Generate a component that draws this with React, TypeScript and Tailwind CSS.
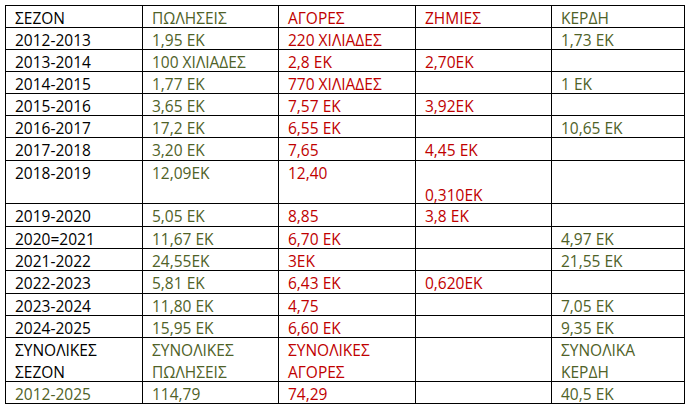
const GREEN = "text-[#4f6228]";
const RED = "text-[#c00000]";
const BLACK = "text-black";

type Cell = { t: string; c: string };

const colColors = [BLACK, GREEN, RED, RED, GREEN];

const rows: string[][] = [
  ["ΣΕΖΟΝ", "ΠΩΛΗΣΕΙΣ", "ΑΓΟΡΕΣ", "ΖΗΜΙΕΣ", "ΚΕΡΔΗ"],
  ["2012-2013", "1,95 ΕΚ", "220 ΧΙΛΙΑΔΕΣ", "", "1,73 ΕΚ"],
  ["2013-2014", "100 ΧΙΛΙΑΔΕΣ", "2,8 ΕΚ", "2,70ΕΚ", ""],
  ["2014-2015", "1,77 ΕΚ", "770 ΧΙΛΙΑΔΕΣ", "", "1 ΕΚ"],
  ["2015-2016", "3,65 ΕΚ", "7,57 ΕΚ", "3,92ΕΚ", ""],
  ["2016-2017", "17,2 ΕΚ", "6,55 ΕΚ", "", "10,65 ΕΚ"],
  ["2017-2018", "3,20 ΕΚ", "7,65", "4,45 ΕΚ", ""],
  ["2018-2019", "12,09ΕΚ", "12,40", "\n0,310ΕΚ", ""],
  ["2019-2020", "5,05 ΕΚ", "8,85", "3,8 ΕΚ", ""],
  ["2020=2021", "11,67 ΕΚ", "6,70 ΕΚ", "", "4,97 ΕΚ"],
  ["2021-2022", "24,55ΕΚ", "3ΕΚ", "", "21,55 ΕΚ"],
  ["2022-2023", "5,81 ΕΚ", "6,43 ΕΚ", "0,620ΕΚ", ""],
  ["2023-2024", "11,80 ΕΚ", "4,75", "", "7,05 ΕΚ"],
  ["2024-2025", "15,95 ΕΚ", "6,60 ΕΚ", "", "9,35 ΕΚ"],
  ["ΣΥΝΟΛΙΚΕΣ\nΣΕΖΟΝ", "ΣΥΝΟΛΙΚΕΣ\nΠΩΛΗΣΕΙΣ", "ΣΥΝΟΛΙΚΕΣ\nΑΓΟΡΕΣ", "", "ΣΥΝΟΛΙΚΑ\nΚΕΡΔΗ"],
  ["2012-2025", "114,79", "74,29", "", "40,5 ΕΚ"],
];

function cellsFor(row: string[], i: number): Cell[] {
  return row.map((t, j) => {
    // the totals line has its season in green too
    const c = i === rows.length - 1 && j === 0 ? GREEN : colColors[j];
    return { t, c };
  });
}

export default function App() {
  return (
    <div className="min-h-screen bg-white pl-[5px] pt-[5px]">
      <div
        className="grid w-max grid-cols-[137px_136px_137px_136px_133px] grid-rows-[22px_22px_22px_22px_22px_22px_23px_43px_23px_22px_22px_23px_22px_22px_44px_22px] border-l border-t border-black text-[15.5px] leading-[22px]"
        style={{ fontFamily: '"Open Sans", "Noto Sans", sans-serif' }}
      >
        {rows.map((row, i) =>
          cellsFor(row, i).map((cell, j) => (
            <div
              key={`${i}-${j}`}
              className={`whitespace-pre border-b border-r border-black pl-[9px] pt-px ${cell.c}`}
            >
              {cell.t}
            </div>
          ))
        )}
      </div>
    </div>
  );
}
